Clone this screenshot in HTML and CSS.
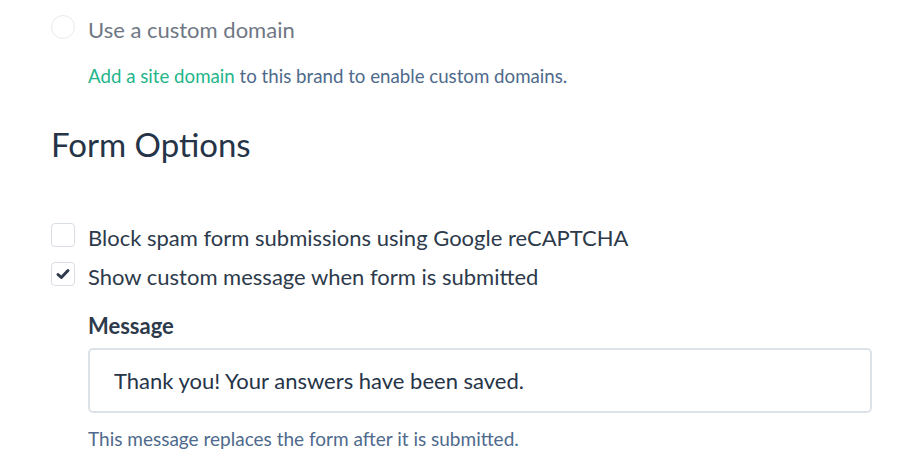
FILE: index.html
```html
<!DOCTYPE html>
<html lang="en">
<head>
    <meta charset="UTF-8">
    <meta name="viewport" content="width=device-width, initial-scale=1.0">
    <link rel="stylesheet" href="styles.css">
</head>
<body>
<div class="settings">
    <div class="option disabled">
        <span class="radio"></span>
        <span class="option-label">Use a custom domain</span>
    </div>
    <p class="hint hint-domain"><a href="#" class="link">Add a site domain</a> to this brand to enable custom domains.</p>

    <h2 class="section-title">Form Options</h2>

    <div class="option option-first">
        <span class="checkbox"></span>
        <span class="option-label">Block spam form submissions using Google reCAPTCHA</span>
    </div>
    <div class="option option-checked">
        <span class="checkbox">
            <svg width="16" height="16" viewBox="0 0 16 16"><path d="M3 8.5 L6.3 11.5 L13 4.5" fill="none" stroke="#2d3a4b" stroke-width="3" stroke-linecap="round" stroke-linejoin="round"/></svg>
        </span>
        <span class="option-label">Show custom message when form is submitted</span>
    </div>

    <div class="field">
        <label class="field-label">Message</label>
        <div class="text-input">Thank you! Your answers have been saved.</div>
        <p class="hint hint-field">This message replaces the form after it is submitted.</p>
    </div>
</div>
</body>
</html>
```

FILE: styles.css
```css
body {
    margin: 0;
    padding: 0;
    font-family: Lato, "Open Sans", sans-serif;
    background-color: #ffffff;
    color: #2d3a4b;
}

.settings {
    padding: 15px 28px 0 51px;
}

.option {
    display: flex;
    align-items: center;
    gap: 13px;
    height: 24px;
}

.option-label {
    font-size: 22px;
    line-height: 24px;
    padding-top: 5px;
    color: #2d3a4b;
}

.disabled .option-label {
    color: #6f7784;
}

.radio {
    width: 22px;
    height: 22px;
    border: 1px solid #e6e9ee;
    border-radius: 50%;
    flex-shrink: 0;
}

.checkbox {
    width: 22px;
    height: 22px;
    border: 1px solid #d9dee5;
    border-radius: 4px;
    flex-shrink: 0;
    display: flex;
    align-items: center;
    justify-content: center;
}

.hint {
    margin: 0;
    font-size: 18.7px;
    line-height: 24px;
    color: #4e6a8c;
}

.hint-domain {
    margin: 25px 0 0 37px;
}

.link {
    color: #1fb58b;
    text-decoration: none;
}

.section-title {
    margin: 36px 0 0 0;
    font-size: 33px;
    font-weight: 400;
    color: #253447;
    line-height: 40px;
}

.option-first {
    margin-top: 59px;
}

.option-checked {
    margin-top: 15px;
}

.field {
    margin: 27px 0 0 37px;
}

.field-label {
    display: block;
    font-size: 22px;
    font-weight: 700;
    color: #2d3a4b;
    line-height: 26px;
}

.text-input {
    box-sizing: border-box;
    margin-top: 9px;
    height: 65px;
    border: 2px solid #dde2e9;
    border-radius: 5px;
    padding: 0 24px;
    display: flex;
    align-items: center;
    font-size: 22px;
    color: #253447;
}

.hint-field {
    margin-top: 14px;
    font-size: 19px;
}
```
